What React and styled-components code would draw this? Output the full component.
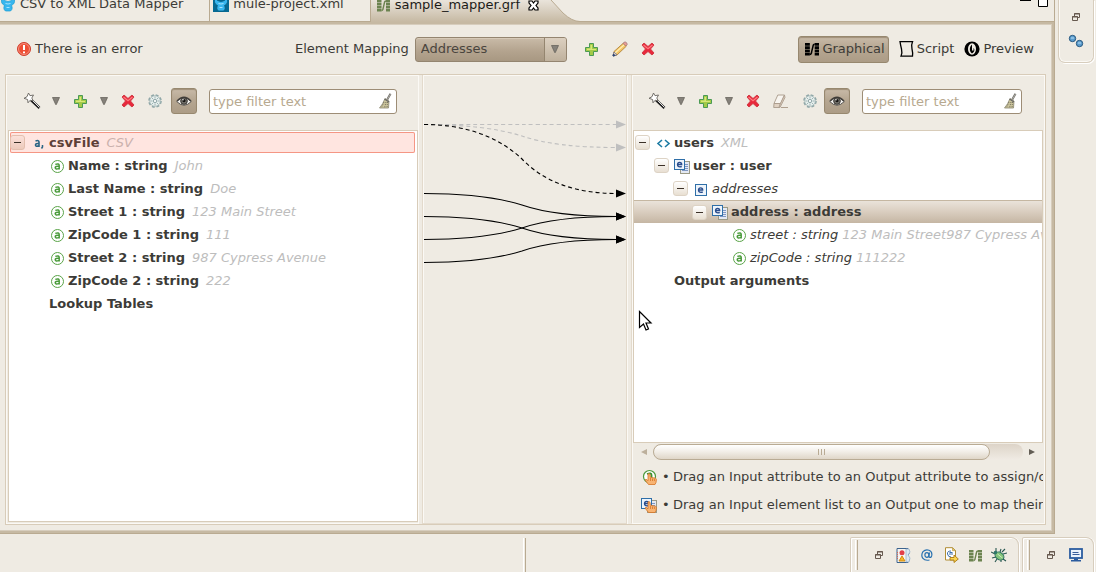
import React from "react";
import styled, { createGlobalStyle, css } from "styled-components";

const c = {
  bg: "#efebe3",
  text: "#3c3b37",
  muted: "#bdbdbd",
  line: "#d8ccb9",
  softLine: "#e3dacc",
  edge: "#b9aa91",
  frame: "#c6b9a3",
  frameLight: "#d7cdbd",
  light: "#fbf9f5",
};

const GlobalStyle = createGlobalStyle`
  *, *::before, *::after { box-sizing: border-box; }
  body {
    margin: 0;
    background: ${c.bg};
    color: ${c.text};
    font: 13px/16px "DejaVu Sans", sans-serif;
  }
  button, input, select { font: inherit; color: inherit; }
  svg { display: block; flex: none; }
`;

/* ---------- window frame ---------- */

const Page = styled.div`
  display: flex;
  flex-direction: column;
  min-height: 100vh;
`;

const Main = styled.div`
  display: flex;
  flex: 1;
`;

const Editor = styled.main`
  display: flex;
  flex-direction: column;
  flex: 1;
  min-width: 0;
  border-right: 1px solid ${c.edge};
  border-bottom: 1px solid ${c.edge};
`;

const TabStrip = styled.div`
  display: flex;
  align-items: flex-end;
  height: 22px;
  overflow: hidden;
  box-shadow: inset 0 -1px ${c.edge};
`;

const Tab = styled.button`
  display: flex;
  align-items: center;
  gap: 4px;
  height: 34px;
  margin: 0 0 1px;
  padding: 0 26px 0 ${(p) => p.$start}px;
  border: 0;
  border-right: 1px solid ${c.edge};
  background: none;
  white-space: nowrap;
`;

const ActiveTab = styled.div`
  display: flex;
  align-items: center;
  height: 34px;
  padding: 0 0 0 6px;
  color: #1c1b19;
  background: linear-gradient(#f2eee8 20%, ${c.frame});
`;

const TabLabel = styled.button`
  display: flex;
  align-items: center;
  gap: 5px;
  padding: 0;
  border: 0;
  background: none;
`;

const CloseButton = styled.button`
  padding: 0 0 0 8px;
  border: 0;
  background: none;
`;

const WindowButtons = styled.div`
  display: flex;
  gap: 7px;
  height: 22px;
  margin-left: auto;
  padding-right: 6px;
`;

const WindowButton = styled.button`
  padding: 0;
  border: 0;
  background: none;
  align-self: flex-start;
`;

const EditorBody = styled.div`
  display: flex;
  flex-direction: column;
  flex: 1;
  padding: 0 6px 6px 5px;
  border: solid ${c.frame};
  border-width: 2px 2px 2px 0;
  box-shadow: inset -1px 1px ${c.frameLight}, inset 0 -1px ${c.frameLight};
`;

const SideTrim = styled.aside`
  width: 41px;
  padding: 0 2px 0 3px;
`;

const SideBox = styled.div`
  display: flex;
  flex-direction: column;
  align-items: center;
  gap: 8px;
  height: 63px;
  padding-top: 9px;
  border: 1px solid ${c.frameLight};
  border-top: 0;
  border-radius: 0 0 7px 7px;
  box-shadow: inset 0 -1px ${c.light}, inset 1px 0 ${c.light}, 1px 1px #fff;
`;

const TrimButton = styled.button`
  display: grid;
  place-items: center;
  width: ${(p) => p.$w || 16}px;
  height: 16px;
  padding: 0;
  border: 0;
  background: none;
`;

/* ---------- header ---------- */

const Header = styled.div`
  display: flex;
  align-items: center;
  height: 50px;
  padding: 0 12px;
`;

const ErrorLine = styled.div`
  display: flex;
  align-items: center;
  gap: 4px;
  flex: 0 0 278px;
`;

const MappingGroup = styled.div`
  display: flex;
  align-items: center;
`;

const SelectBox = styled.div`
  position: relative;
  width: 152px;
  margin: 0 11px 0 6px;
`;

const Select = styled.select`
  appearance: none;
  display: block;
  width: 100%;
  height: 25px;
  padding: 0 26px 0 5px;
  border: 1px solid #948570;
  border-radius: 3px;
  background: linear-gradient(#c9bba8, #b4a48f 55%, #a89882);
  box-shadow: inset 0 1px #d7cab8;
  color: #4a453e;
`;

const SelectArrow = styled.span`
  position: absolute;
  top: 1px;
  right: 1px;
  display: grid;
  place-items: center;
  width: 22px;
  height: 23px;
  border-left: 1px solid #94856f;
  border-radius: 0 2px 2px 0;
  background: linear-gradient(#dcd0c0, #bfb19d);
  pointer-events: none;
`;

const ViewGroup = styled.div`
  display: flex;
  align-items: center;
  gap: 10px;
  margin-left: auto;
`;

const pressed = css`
  border: 1px solid #97886f;
  background: linear-gradient(#c8baa8, #b6a792 45%, #ac9c86);
  box-shadow: inset 0 1px 1px #a09079;
`;

const ViewButton = styled.button`
  display: flex;
  align-items: center;
  gap: 3px;
  height: 27px;
  padding: 0;
  border: 0;
  background: none;
  white-space: nowrap;
  ${(p) => p.$active && css`
    ${pressed}
    padding: 0 3px 0 6px;
    border-radius: 3px;
  `}
`;

/* ---------- workspace ---------- */

const Workspace = styled.div`
  display: flex;
  flex: 1;
  border: 1px solid ${c.line};
`;

const InputPanel = styled.section`
  display: flex;
  flex-direction: column;
  flex: 1 1 0;
  min-width: 0;
  padding: 0 0 1px 2px;
  border-bottom: 1px solid ${c.light};
  box-shadow: inset 1px 1px ${c.light};
`;

const OutputPanel = styled(InputPanel)`
  padding: 0 1px 4px 1px;
  border-left: 1px solid ${c.softLine};
  border-right: 1px solid ${c.light};
`;

const Sash = styled.div`
  width: 4px;
  box-shadow: inset 1px 0 ${c.light};
`;

const LinkCanvas = styled.section`
  width: 205px;
  border: solid ${c.softLine};
  border-width: 0 1px 1px 1px;
  box-shadow: inset 1px 1px ${c.light};
`;

const Toolbar = styled.div`
  display: flex;
  align-items: center;
  height: 52px;
  margin-bottom: 3px;
  padding: 0 21px 0 12px;
`;

const ToolButton = styled.button`
  display: grid;
  place-items: center;
  flex: none;
  width: ${(p) => p.$w || 24}px;
  height: 26px;
  padding: 0;
  border: 0;
  background: none;
`;

const ToggleButton = styled(ToolButton)`
  ${pressed}
  margin: 0 12px 0 1px;
  border-radius: 3px;
`;

const FilterBox = styled.div`
  position: relative;
  flex: 1;
  min-width: 0;
`;

const FilterInput = styled.input`
  display: block;
  width: 100%;
  height: 25px;
  padding: 0 26px 0 3px;
  border: 1px solid #9d8d76;
  border-radius: 3px;
  background: #fff;
  &::placeholder { color: #b7a990; opacity: 1; }
`;

const ClearButton = styled.button`
  position: absolute;
  top: 4px;
  right: 5px;
  padding: 0;
  border: 0;
  background: none;
`;

const Tree = styled.ul`
  position: relative;
  flex: 1;
  margin: 0;
  padding: 0;
  overflow: hidden;
  list-style: none;
  border: 1px solid ${c.line};
  background: #fff;
`;

const TreeRow = styled.li`
  display: flex;
  align-items: center;
  height: 23px;
  padding-left: ${(p) => 1 + p.$level * 19}px;
  white-space: pre;
  ${(p) => p.$state === "selected" && css`
    border-top: 1px solid #c5b7a2;
    background: linear-gradient(#eae3da, #d9cdbf 50%, #c5b6a3);
  `}
  ${(p) => p.$state === "error" && css`
    height: 21px;
    margin: 1px 2px 1px 1px;
    padding-left: 0;
    border-radius: 2px;
    background: #ffe5e0;
    box-shadow: inset 0 0 0 1px #f59684;
    color: #5d4038;
  `}
`;

const Expander = styled.button`
  display: grid;
  place-items: center;
  flex: none;
  width: 15px;
  height: 15px;
  padding: 0;
  border: 1px solid ${(p) => (p.$error ? "#e3bfae" : "#ddd3c5")};
  border-radius: 3px;
  background: ${(p) => (p.$error ? "linear-gradient(#fbe1da, #edcabb)" : "linear-gradient(#fff, #e8dfd2)")};
`;

const ExpanderGap = styled.span`
  flex: none;
  width: 15px;
`;

const RowIcon = styled.span`
  flex: none;
  width: 16px;
  height: 16px;
  margin: 0 3px 0 5px;
`;

const RowName = styled.span`
  margin-right: ${(p) => (p.$italic ? 4 : 7)}px;
  font-weight: ${(p) => (p.$italic ? 400 : 700)};
  font-style: ${(p) => (p.$italic ? "italic" : "normal")};
`;

const RowValue = styled.span`
  font-style: italic;
  color: ${(p) => (p.$error ? "#cbb1ad" : c.muted)};
`;

const Cursor = styled.li`
  position: absolute;
  top: 179px;
  left: 4px;
`;

const ScrollBar = styled.div`
  display: flex;
  align-items: center;
  height: 17px;
  padding: 0 2px;
  margin-bottom: 3px;
`;

const ScrollButton = styled.button`
  display: grid;
  place-items: center;
  width: 18px;
  height: 17px;
  padding: 0;
  border: 0;
  background: none;
`;

const ScrollTrack = styled.div`
  flex: 1;
  height: 16px;
  border-radius: 8px;
  background: linear-gradient(#ddd4c8, #f0ebe4);
`;

const ScrollThumb = styled.div`
  display: flex;
  align-items: center;
  justify-content: center;
  gap: 2px;
  width: 91%;
  height: 16px;
  border: 1px solid #b9ab94;
  border-radius: 8px;
  background: linear-gradient(#fff, #f3efe9 45%, #dfd6c8);
`;

const Grip = styled.i`
  width: 1px;
  height: 6px;
  background: #b9ab94;
`;

const Hint = styled.div`
  display: flex;
  align-items: center;
  height: 28px;
  padding-left: 8px;
  overflow: hidden;
  white-space: nowrap;
`;

const Bullet = styled.span`
  flex: none;
  width: 11px;
  margin-left: 5px;
`;

/* ---------- bottom trim ---------- */

const BottomTrim = styled.footer`
  display: flex;
  height: 38px;
  padding: 3px 2px 0 0;
`;

const StatusSpace = styled.div`
  flex: ${(p) => p.$grow};
`;

const Divider = styled.div`
  width: 3px;
  height: 34px;
  margin-top: 1px;
  border-left: 1px solid #fff;
  border-right: 1px solid ${c.edge};
`;

const TrimGroup = styled.div`
  display: flex;
  align-items: center;
  margin-left: 3px;
  padding: 0 ${(p) => p.$end}px 0 4px;
  border: solid ${c.frameLight};
  border-width: 1px 1px 0 1px;
  border-radius: 2px 8px 0 0;
  box-shadow: inset 1px 1px #fff, 1px 0 #fff;
`;

const Handle = styled.div`
  width: 3px;
  height: 30px;
  margin-right: 9px;
  border-left: 1px solid #fff;
  border-right: 1px solid ${c.edge};
`;

/* ---------- icons ---------- */

const Mule = ({ dark }) => (
  <svg width="16" height="16" viewBox="0 0 16 16">
    {dark && <rect width="16" height="16" fill="#066a93" />}
    <path d="M1.500 0v5.500c0 2 1.500 3 3 4-1 2-1 4 1 5.500h5c2-1.500 2-3.500 1-5.500 1.500-1 3-2 3-4V0l-3 4.500q-3.500 2-7 0z" fill="#38b6ee" stroke={dark ? "#075a7e" : "#159bd3"} strokeWidth=".7" />
    <path d="M5.500 7.500q2.500 1 5 0M6.500 11.500h3" stroke="#a5e3ff" fill="none" />
  </svg>
);

const Grf = ({ color = "#000", width = 13 }) => (
  <svg width={width} height={width} viewBox="0 0 13 13" fill={color}>
    <path d="M0 1h4.500v2.500H0zM0 4h4.500v2.500H0zM0 7h4.500v2.500H0zM0 10h4.500v2.500H0zM9 1h4v2.500H9zM9 4h4v2.500H9zM9 7h4v2.500H9zM9 10h4v2.500H9z" />
    <path d="M4.500 11.500q1.500 0 1.700-2.500L7.300 4.500Q7.500 2 9 2" fill="none" stroke={color} strokeWidth="1.400" />
  </svg>
);

const CloseX = () => (
  <svg width="11" height="11" viewBox="0 0 11 11">
    <path d="M1 1h3l1.500 2L7 1h3v2L8 5.500 10 8v2H7L5.500 8 4 10H1V8l2-2.500L1 3z" fill="#fff" stroke="#000" strokeWidth="1.200" />
  </svg>
);

const ErrorIcon = () => (
  <svg width="14" height="14" viewBox="0 0 14 14">
    <circle cx="7" cy="7" r="6.500" fill="#e63a25" stroke="#d0402f" />
    <circle cx="7" cy="7" r="5.500" fill="#ee4f35" stroke="#f8b5a6" strokeWidth=".7" />
    <path d="M7 3v5M7 9.500v1.800" stroke="#fff" strokeWidth="2" />
  </svg>
);

const Plus = () => (
  <svg width="13" height="13" viewBox="0 0 13 13">
    <path d="M4.500.5h4v4h4v4h-4v4h-4v-4h-4v-4h4z" fill="#a3ca48" stroke="#4b9a55" />
    <path d="M5.500 2h1.500v4H11v1H2V5.500h3.500z" fill="#d8e878" />
  </svg>
);

const Cross = () => (
  <svg width="14" height="14" viewBox="0 0 14 14">
    <path d="M1 3l2-2 4 3.500L11 1l2 2-3.500 4 3.500 4-2 2-4-3.500L3 13l-2-2 3.500-4z" fill="#e8283c" stroke="#cf3540" strokeWidth=".9" />
    <path d="M2.500 3L7 6.800 11.500 3" fill="none" stroke="#ff7c80" strokeWidth="1.200" />
  </svg>
);

const Pencil = () => (
  <svg width="16" height="16" viewBox="0 0 16 16">
    <path d="M1 15l1-4.500L11.500 2l3 3L5 14z" fill="#f4c568" stroke="#aa7b31" strokeWidth=".8" />
    <path d="M3 12l9-8" stroke="#fff0b4" strokeWidth="1.200" />
    <path d="M11 2.300L13 .8q2 .5 2.300 2.500L13.700 5z" fill="#e89b94" stroke="#9b7479" strokeWidth=".7" />
    <path d="M2 11l-1 4 4-1.200z" fill="#f2ddbc" stroke="#5b6691" strokeWidth=".7" />
    <path d="M1 15l.5-2 1.500 1.500z" fill="#28457e" stroke="#28457e" />
  </svg>
);

const Down = () => (
  <svg width="8" height="8" viewBox="0 0 8 8">
    <path d="M.5.500h7L4.300 7.500h-.6z" fill="#85817a" stroke="#68645d" strokeWidth=".8" />
  </svg>
);

const Wand = () => (
  <svg width="18" height="18" viewBox="0 0 18 18">
    <path d="M8 8l8.500 8" stroke="#1d1d1d" strokeWidth="2.600" />
    <path d="M8.500 7.500l8 8" stroke="#e5e5e5" strokeWidth="1" />
    <path d="M5.500 1L7 3.700 10.500 3 8.800 6l1.400 2.800-3-.6L5 10.800l-.4-3.300L1 6.300 4 4.700z" fill="#fff" stroke="#66635e" strokeWidth=".9" />
  </svg>
);

const Gear = () => (
  <svg width="14" height="14" viewBox="0 0 14 14">
    <circle cx="7" cy="7" r="5.800" fill="none" stroke="#8ea5a6" strokeWidth="2" strokeDasharray="2.800 1.755" />
    <circle cx="7" cy="7" r="5.300" fill="#e6efed" stroke="#a3b7b7" strokeWidth=".8" />
    <path d="M7 2.500v2M7 9.500v2M2.500 7h2M9.500 7h2M3.800 3.800l1.500 1.500M8.700 8.700l1.500 1.500M10.200 3.800L8.700 5.300M5.300 8.700l-1.500 1.500" stroke="#98adae" strokeWidth=".9" />
    <circle cx="7" cy="7" r="1.600" fill="#fff" stroke="#869e9f" strokeWidth=".9" />
  </svg>
);

const Eye = () => (
  <svg width="16" height="12" viewBox="0 0 16 12">
    <path d="M.7 6.500Q7-1.500 15.300 6.500 8 14 .7 6.500z" fill="#f3f1ee" stroke="#54514c" />
    <path d="M1 6Q8-1.500 15 6" fill="none" stroke="#44413d" strokeWidth="1.300" />
    <circle cx="8" cy="6" r="3.300" fill="#77756f" stroke="#363430" />
    <circle cx="8" cy="5.700" r="1.600" fill="#171614" />
    <circle cx="7" cy="4.700" r=".7" fill="#fff" />
  </svg>
);

const Eraser = () => (
  <svg width="16" height="15" viewBox="0 0 16 15">
    <path d="M4.800 1h6.700L7.500 9.500H1z" fill="#f8f5f0" stroke="#a99b8b" strokeWidth=".9" />
    <path d="M1 9.500h6.500L6 13.500H.7z" fill="#e0d2c3" stroke="#a99b8b" strokeWidth=".9" />
    <path d="M7.500 9.500l4-8.500.5 2.500-5 10H6z" fill="#d9cabb" stroke="#a99b8b" strokeWidth=".8" />
    <path d="M8 13.500h7" stroke="#afa08f" />
  </svg>
);

const Broom = () => (
  <svg width="14" height="16" viewBox="0 0 14 16">
    <path d="M12.500.8L9 7" stroke="#6b6963" strokeWidth="2" />
    <path d="M12.500 1L9 7" stroke="#c9c7c2" strokeWidth=".7" />
    <path d="M7 5.500l4 2.500-.5 7H1.500Q5 11 7 5.500z" fill="#cbc49b" stroke="#8a8670" strokeWidth=".8" />
    <path d="M6 9l-2.500 5.500M8 9l-1.500 6M9.500 9L9 15" stroke="#605d50" strokeWidth=".8" strokeDasharray="1 1" />
    <path d="M6.500 6l4.500 3" stroke="#666" strokeWidth="1.200" />
  </svg>
);

const Script = () => (
  <svg width="15" height="16" viewBox="0 0 15 16">
    <path d="M1 .7h12.500Q12 4 13 8t.5 7.200H2Q3.500 12 2.500 8T1 .7z" fill="none" stroke="#000" strokeWidth="1.300" />
  </svg>
);

const Preview = () => (
  <svg width="16" height="16" viewBox="0 0 16 16">
    <circle cx="8" cy="8" r="7.600" fill="#000" />
    <ellipse cx="8" cy="8" rx="4" ry="5.800" fill="#efebe3" />
    <path d="M8 3.500C5.300 6 5 10 8 12.500c3-2 2.800-4.500 1.500-5.500v2.500H8z" fill="#000" />
  </svg>
);

const Attr = () => (
  <svg width="16" height="16" viewBox="0 0 16 16">
    <circle cx="8.500" cy="8.500" r="6" fill="#fff" stroke="#5aa448" strokeWidth="1" />
    <path d="M6.300 6.400q3.900-1.300 3.900 1.200v4M10 8.400q-3.800-.4-3.800 1.400.2 2.100 3.800.6" fill="none" stroke="#4a9b3b" strokeWidth="1.500" />
  </svg>
);

const CsvIcon = () => (
  <svg width="16" height="16" viewBox="0 0 16 16">
    <path d="M5.500 6q3.500-1.200 3.500 1V12M9 8.500q-3.500-.4-3.500 1.500 0 2 3.500.7" fill="none" stroke="#2b6585" strokeWidth="1.600" />
    <path d="M12.500 10v2l-1 1.500" fill="none" stroke="#2b6585" strokeWidth="1.500" />
  </svg>
);

const XmlIcon = () => (
  <svg width="16" height="16" viewBox="0 0 16 16">
    <path d="M7 5L3 8.500 7 12M10 5l4 3.500L10 12" fill="none" stroke="#1d7ba3" strokeWidth="1.600" />
  </svg>
);

const E = ({ x = 0, y = 0, size = 11 }) => (
  <g transform={`translate(${x} ${y})`}>
    <rect x=".5" y=".5" width={size - 1} height={size - 1} fill="#edf4fb" stroke="#2f6fa8" />
    <path d={`M3.500 ${size / 2}h4.200q0-2.200-2.100-2.200T3.500 ${size / 2}q0 2.400 2.500 2.400 1 0 1.700-.5`} fill="none" stroke="#2a4d8d" strokeWidth="1.300" />
  </g>
);

const Element = () => (
  <svg width="16" height="16" viewBox="0 0 16 16"><E x={2} y={3} size={12} /></svg>
);

const ElementList = ({ children }) => (
  <svg width="16" height="16" viewBox="0 0 16 16">
    <rect x="6.500" y="3.500" width="9" height="12" fill="#e4e9f3" stroke="#9b9a86" />
    <path d="M8 6.500h6M8 8.500h6M8 10.500h6M8 12.500h6" stroke="#7e97c3" />
    <E x={0} y={1} size={11} />
    {children}
  </svg>
);

const Hand = () => (
  <g stroke="#d57526" strokeWidth=".8">
    <path d="M7 5q1.200-1 2 .3l.4 3 5 .9q1 .4 1 1.500L15 13.500 14 15.500H7.500L4 11q.8-1.500 2.200 0L7 11.800z" fill="#f8b473" />
    <path d="M9.500 9v3M11.500 9.500V12M13.400 10v2" />
  </g>
);

const AttrHand = () => (
  <svg width="16" height="16" viewBox="0 0 16 16">
    <circle cx="8.500" cy="7.500" r="6" fill="#fff" stroke="#4b9a3d" strokeWidth="1.200" />
    <path d="M6 5q4.500-1.500 4.500 1v4" fill="none" stroke="#3d9232" strokeWidth="1.800" />
    <Hand />
  </svg>
);

const ListHand = () => (
  <ElementList>
    <Hand />
  </ElementList>
);

const Restore = () => (
  <svg width="8" height="8" viewBox="0 0 8 8" fill="#efebe3" stroke="#66594f">
    <path d="M2.500.500h5v4h-5zM2 1h6" />
    <path d="M.500 3.500h5v4h-5zM0 4h6" />
  </svg>
);

const Balls = () => (
  <svg width="16" height="14" viewBox="0 0 16 14" stroke="#28577e">
    <circle cx="4.500" cy="4.500" r="3.200" fill="#5c9dce" />
    <circle cx="11.500" cy="9.500" r="3.200" fill="#5c9dce" />
    <path d="M3 4h3M10 9h3" stroke="#b9def4" />
  </svg>
);

const Minus = () => (
  <svg width="7" height="1" viewBox="0 0 7 1"><path d="M0 .500h7" stroke="#3c3128" /></svg>
);

const MuleFlow = () => (
  <svg width="15" height="15" viewBox="0 0 15 15">
    <path d="M1 .500h11l-1 3 2 2-2 3 2 3-1 3H1z" fill="#f7f4ef" stroke="#3c638e" />
    <path d="M10 1h3l1 3-2 3 2 3-1 4h-3z" fill="#dde9f2" stroke="#8eaac5" strokeWidth=".7" />
    <circle cx="6" cy="4.800" r="2.500" fill="#e23f49" />
    <path d="M6 8l3 5H3z" fill="#f6b52b" stroke="#d28b13" />
    <path d="M1.500 4v8" stroke="#d46854" strokeDasharray="1 1" />
  </svg>
);

const At = () => (
  <svg width="12" height="12" viewBox="0 0 12 12" fill="none" stroke="#2871b0" strokeWidth="1.200">
    <path d="M8.500 11Q4 12 1.700 9.200-.2 6 2 2.700 4.500 0 8 1.200q3.300 1.300 2.800 5-.4 2.500-2 2.200-1.100-.2-.8-2L8.500 3.500" />
    <ellipse cx="5.900" cy="6" rx="2" ry="2.400" />
  </svg>
);

const ExportDoc = () => (
  <svg width="15" height="16" viewBox="0 0 15 16">
    <path d="M1.500.700h7l3 3V13h-10z" fill="#fff" stroke="#b08d34" />
    <path d="M8.500.700v3h3z" fill="#e7cf78" stroke="#b08d34" strokeWidth=".6" />
    <path d="M7 4q-4 0-3.500 3T7 10M5 7h4M5.500 5.500h3" fill="none" stroke="#3c6faa" />
    <path d="M6 10.500h4V8l4.300 4L10 15.500V13H6z" fill="#fbd651" stroke="#b2821d" />
  </svg>
);

const Bug = () => (
  <svg width="16" height="15" viewBox="0 0 16 15">
    <path d="M5 0v4M10 1L9 4M0 4l4 2M1 10l4-1M4 14l2-3M10 14v-3M12 11l3 2M12 6l4-1M11 4l3-3" stroke="#28564f" strokeWidth="1.100" />
    <ellipse cx="8.500" cy="8" rx="4.800" ry="3.600" transform="rotate(35 8.500 8)" fill="#83c47b" stroke="#22695b" />
    <circle cx="4.500" cy="4.500" r="1.800" fill="#2f7769" />
    <path d="M6.500 6l5 4" stroke="#d2ecc0" />
  </svg>
);

const Monitor = () => (
  <svg width="14" height="14" viewBox="0 0 14 14">
    <rect x="1" y="1" width="12" height="9" fill="#edf4fc" stroke="#2b5c9f" strokeWidth="1.800" />
    <path d="M3.500 4.500h6M3.500 6.500h7" stroke="#3a5f9c" />
    <path d="M5 10.500h4v1.500h3v1.500H2V12h3z" fill="#2b5c9f" />
  </svg>
);

/* ---------- data ---------- */

const inputRows = [
  { name: "csvFile", value: "CSV", icon: CsvIcon, level: 0, open: true, state: "error" },
  { name: "Name : string", value: "John", icon: Attr, level: 1 },
  { name: "Last Name : string", value: "Doe", icon: Attr, level: 1 },
  { name: "Street 1 : string", value: "123 Main Street", icon: Attr, level: 1 },
  { name: "ZipCode 1 : string", value: "111", icon: Attr, level: 1 },
  { name: "Street 2 : string", value: "987 Cypress Avenue", icon: Attr, level: 1 },
  { name: "ZipCode 2 : string", value: "222", icon: Attr, level: 1 },
  { name: "Lookup Tables", level: 0 },
];

const outputRows = [
  { name: "users", value: "XML", icon: XmlIcon, level: 0, open: true },
  { name: "user : user", icon: ElementList, level: 1, open: true },
  { name: "addresses", icon: Element, level: 2, open: true, italic: true },
  { name: "address : address", icon: ElementList, level: 3, open: true, state: "selected" },
  { name: "street : string", value: "123 Main Street987 Cypress Avenue", icon: Attr, level: 4, italic: true },
  { name: "zipCode : string", value: "111222", icon: Attr, level: 4, italic: true },
  { name: "Output arguments", level: 0 },
];

const links = [
  { from: 0, to: 0, kind: "faded" },
  { from: 0, to: 1, kind: "faded" },
  { from: 0, to: 3, kind: "dashed" },
  { from: 3, to: 4 },
  { from: 4, to: 5 },
  { from: 5, to: 4 },
  { from: 6, to: 5 },
];

/* ---------- parts ---------- */

function Link({ from, to, kind }) {
  const y1 = 49.5 + from * 23;
  const y2 = 49.5 + to * 23;
  const mid = (y1 + y2) / 2;
  const color = kind === "faded" ? "#bfbfbf" : "#000";
  return (
    <g>
      <path
        d={`M1 ${y1}Q62 ${y1} 99 ${mid}Q132 ${y2} 194 ${y2}`}
        fill="none"
        stroke={color}
        strokeWidth="1.100"
        strokeDasharray={kind ? "4 3" : undefined}
      />
      <path d={`M193 ${y2 - 4}L203 ${y2}L193 ${y2 + 4}z`} fill={color} />
    </g>
  );
}

function Rows({ rows }) {
  return rows.map(({ name, value, icon: Icon, level, open, italic, state }) => {
    const error = state === "error";
    return (
      <TreeRow key={name} $level={level} $state={state}>
        {open ? <Expander $error={error} aria-label={`Collapse ${name}`}><Minus /></Expander> : <ExpanderGap />}
        <RowIcon>{Icon && <Icon />}</RowIcon>
        <RowName $italic={italic}>{name}</RowName>
        {value && <RowValue $error={error}>{value}</RowValue>}
      </TreeRow>
    );
  });
}

function PanelToolbar({ label, eraser }) {
  return (
    <Toolbar>
      <ToolButton aria-label="Auto map"><Wand /></ToolButton>
      <ToolButton aria-label="Auto map options"><Down /></ToolButton>
      <ToolButton aria-label="Add"><Plus /></ToolButton>
      <ToolButton aria-label="Add options"><Down /></ToolButton>
      <ToolButton aria-label="Delete"><Cross /></ToolButton>
      {eraser && <ToolButton $w={32} aria-label="Clear mapping"><Eraser /></ToolButton>}
      <ToolButton $w={eraser ? 26 : 30} aria-label="Settings"><Gear /></ToolButton>
      <ToggleButton $w={26} aria-label="Show values" aria-pressed="true"><Eye /></ToggleButton>
      <FilterBox>
        <FilterInput type="text" placeholder="type filter text" aria-label={label} />
        <ClearButton aria-label="Clear filter"><Broom /></ClearButton>
      </FilterBox>
    </Toolbar>
  );
}

export default function App() {
  return (
    <Page>
      <GlobalStyle />
      <Main>
        <Editor>
          <TabStrip>
            <Tab $start={0}><Mule />CSV to XML Data Mapper</Tab>
            <Tab $start={3}><Mule dark />mule-project.xml</Tab>
            <ActiveTab>
              <TabLabel><Grf color="#6c8350" />sample_mapper.grf</TabLabel>
              <CloseButton aria-label="Close"><CloseX /></CloseButton>
            </ActiveTab>
            <svg width="41" height="34" viewBox="0 0 41 34">
              <defs>
                <linearGradient id="tabFill" x1="0" y1="0" x2="0" y2="1">
                  <stop offset=".2" stopColor="#f2eee8" />
                  <stop offset="1" stopColor={c.frame} />
                </linearGradient>
              </defs>
              <path d="M0 0H3L12 12 24 25Q33 33.500 41 33.500V34H0z" fill="url(#tabFill)" />
              <path d="M3 0L12 12 24 25Q33 33.500 41 33.500" fill="none" stroke={c.edge} />
            </svg>
            <WindowButtons>
              <WindowButton aria-label="Minimize">
                <svg width="11" height="2"><rect width="11" height="1" /></svg>
              </WindowButton>
              <WindowButton aria-label="Maximize">
                <svg width="10" height="7"><path d="M.500 0v6.500h9V0" fill="#fff" stroke="#000" /></svg>
              </WindowButton>
            </WindowButtons>
          </TabStrip>
          <EditorBody>
            <Header>
              <ErrorLine><ErrorIcon />There is an error</ErrorLine>
              <MappingGroup>
                <label htmlFor="mapping">Element Mapping</label>
                <SelectBox>
                  <Select id="mapping" defaultValue="Addresses"><option>Addresses</option></Select>
                  <SelectArrow><Down /></SelectArrow>
                </SelectBox>
                <ToolButton $w={28} aria-label="Add mapping"><Plus /></ToolButton>
                <ToolButton $w={28} aria-label="Edit mapping"><Pencil /></ToolButton>
                <ToolButton $w={28} aria-label="Delete mapping"><Cross /></ToolButton>
              </MappingGroup>
              <ViewGroup>
                <ViewButton $active aria-pressed="true"><Grf width={14} />Graphical</ViewButton>
                <ViewButton><Script />Script</ViewButton>
                <ViewButton><Preview />Preview</ViewButton>
              </ViewGroup>
            </Header>
            <Workspace>
              <InputPanel>
                <PanelToolbar label="Filter input" />
                <Tree><Rows rows={inputRows} /></Tree>
              </InputPanel>
              <Sash />
              <LinkCanvas>
                <svg width="203" height="240" viewBox="0 0 203 240" role="img" aria-label="Mapping links">
                  {links.map((l) => <Link key={`${l.from}-${l.to}`} {...l} />)}
                </svg>
              </LinkCanvas>
              <Sash />
              <OutputPanel>
                <PanelToolbar label="Filter output" eraser />
                <Tree>
                  <Rows rows={outputRows} />
                  <Cursor>
                    <svg width="15" height="22" viewBox="0 0 15 22">
                      <path d="M1.500 1.500v16l4-3.500 2.500 6 2.500-1-2.500-6h5z" fill="#fff" stroke="#000" strokeWidth="1.200" />
                    </svg>
                  </Cursor>
                </Tree>
                <ScrollBar>
                  <ScrollButton aria-label="Scroll left">
                    <svg width="6" height="6"><path d="M6 0v6L0 3z" fill="#bdb09c" /></svg>
                  </ScrollButton>
                  <ScrollTrack><ScrollThumb><Grip /><Grip /><Grip /></ScrollThumb></ScrollTrack>
                  <ScrollButton aria-label="Scroll right">
                    <svg width="6" height="6"><path d="M0 0v6l6-3z" fill="#625d54" /></svg>
                  </ScrollButton>
                </ScrollBar>
                <Hint><AttrHand /><Bullet>•</Bullet>Drag an Input attribute to an Output attribute to assign/connect</Hint>
                <Hint><ListHand /><Bullet>•</Bullet>Drag an Input element list to an Output one to map their</Hint>
              </OutputPanel>
            </Workspace>
          </EditorBody>
        </Editor>
        <SideTrim>
          <SideBox>
            <TrimButton aria-label="Restore"><Restore /></TrimButton>
            <TrimButton aria-label="Connections"><Balls /></TrimButton>
          </SideBox>
        </SideTrim>
      </Main>
      <BottomTrim>
        <StatusSpace $grow={524} />
        <Divider />
        <StatusSpace $grow={322} />
        <TrimGroup $end={7}>
          <Handle />
          <TrimButton $w={24} aria-label="Restore views"><Restore /></TrimButton>
          <TrimButton $w={24} aria-label="Message flow"><MuleFlow /></TrimButton>
          <TrimButton $w={24} aria-label="Javadoc"><At /></TrimButton>
          <TrimButton $w={24} aria-label="Declaration"><ExportDoc /></TrimButton>
          <TrimButton $w={24} aria-label="Graph"><Grf color="#6c8350" /></TrimButton>
          <TrimButton $w={24} aria-label="Debug"><Bug /></TrimButton>
        </TrimGroup>
        <TrimGroup $end={4}>
          <Handle />
          <TrimButton $w={24} aria-label="Restore console"><Restore /></TrimButton>
          <TrimButton $w={26} aria-label="Console"><Monitor /></TrimButton>
        </TrimGroup>
      </BottomTrim>
    </Page>
  );
}
